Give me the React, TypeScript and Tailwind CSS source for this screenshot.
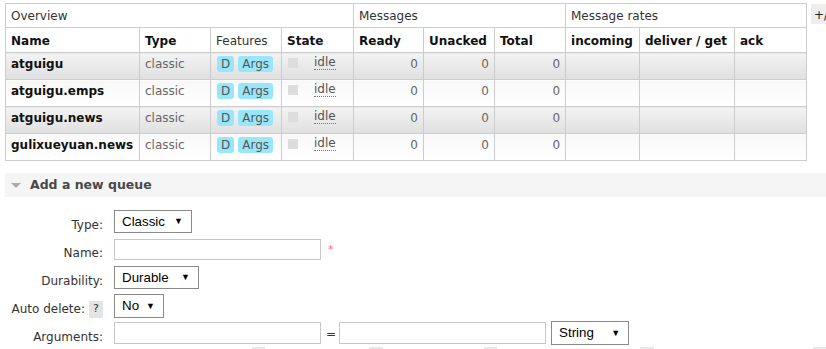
import React from "react";

const rows = ["atguigu", "atguigu.emps", "atguigu.news", "gulixueyuan.news"];

function Select({ label, w }: { label: string; w: string }) {
  return (
    <div
      className={`${w} h-full border border-[#8a8a8a] bg-white flex items-center justify-between pl-[7px] pr-[8px] text-[13.33px] text-black`}
      style={{ fontFamily: '"Liberation Sans", Arial, sans-serif' }}
    >
      <span>{label}</span>
      <span className="text-[9px] leading-none">▼</span>
    </div>
  );
}

function Label({ children }: { children: React.ReactNode }) {
  return (
    <div className="w-[103px] shrink-0 flex items-center justify-end pt-[6px] text-[12px] text-[#333]">
      {children}
    </div>
  );
}

export default function App() {
  const cell = "border border-[#ccc] px-[5px] align-top";
  return (
    <div
      className="w-[826px] h-[349px] overflow-hidden bg-white text-[12px] text-[#333]"
      style={{ fontFamily: '"DejaVu Sans", Verdana, sans-serif' }}
    >
      <div className="flex items-start pt-[3px] pl-[5px]">
        <table className="w-[801px] table-fixed border-collapse shrink-0">
          <colgroup>
            <col className="w-[134px]" />
            <col className="w-[71px]" />
            <col className="w-[71px]" />
            <col className="w-[72px]" />
            <col className="w-[70px]" />
            <col className="w-[71px]" />
            <col className="w-[71px]" />
            <col className="w-[74px]" />
            <col className="w-[95px]" />
            <col className="w-[72px]" />
          </colgroup>
          <thead>
            <tr className="h-[24px]">
              <th colSpan={4} className={`${cell} text-left font-normal align-middle pt-[3px] pb-0`}>Overview</th>
              <th colSpan={3} className={`${cell} text-left font-normal align-middle pt-[3px] pb-0`}>Messages</th>
              <th colSpan={3} className={`${cell} text-left font-normal align-middle pt-[3px] pb-0`}>Message rates</th>
            </tr>
            <tr className="h-[25px] text-[#111]">
              {["Name", "Type", "Features", "State", "Ready", "Unacked", "Total", "incoming", "deliver / get", "ack"].map(
                (h) => (
                  <th
                    key={h}
                    className={`${cell} text-left align-middle pt-[4px] pb-0 whitespace-nowrap ${h === "Features" ? "font-normal text-[#333]" : "font-bold"}`}
                  >
                    {h}
                  </th>
                )
              )}
            </tr>
          </thead>
          <tbody>
            {rows.map((name, i) => {
              const bg =
                i % 2 === 0
                  ? "bg-gradient-to-b from-[#f3f3f3] to-[#e0e0e0]"
                  : "bg-gradient-to-b from-[#f8f8f8] to-[#ffffff]";
              const c = `${cell} ${bg} h-[27px] pt-[2px] pb-0`;
              return (
                <tr key={name}>
                  <td className={`${c} font-bold text-[#111] whitespace-nowrap`}>{name}</td>
                  <td className={`${c} text-[#666]`}>classic</td>
                  <td className={c}>
                    <div className="flex gap-[4px] pt-[1px] pl-[1px]">
                      <span className="h-[16px] px-[4px] rounded-[3px] bg-[#99e6fa] text-[#555] leading-[16px]">D</span>
                      <span className="h-[16px] px-[4px] rounded-[3px] bg-[#99e6fa] text-[#555] leading-[16px]">Args</span>
                    </div>
                  </td>
                  <td className={c}>
                    <div className="flex items-start pl-[1px]">
                      <span className="mt-[3px] w-[10px] h-[10px] bg-[#ddd]" />
                      <span className="ml-[16px] text-[#555] border-b border-dotted border-[#777] leading-[14px]">idle</span>
                    </div>
                  </td>
                  <td className={`${c} text-right text-[#666]`}>0</td>
                  <td className={`${c} text-right text-[#666]`}>0</td>
                  <td className={`${c} text-right text-[#666]`}>0</td>
                  <td className={c}></td>
                  <td className={c}></td>
                  <td className={c}></td>
                </tr>
              );
            })}
          </tbody>
        </table>
        <div className="ml-[4px] mt-[1px] h-[20px] w-[30px] shrink-0 bg-[#eee] pl-[3px] pt-[2px] text-[12px] text-[#222] whitespace-nowrap">
          +/-
        </div>
      </div>

      <div className="mt-[12px] ml-[5px] h-[24px] bg-[#f5f5f5] flex items-center">
        <span className="ml-[6px] w-0 h-0 border-l-[5px] border-r-[5px] border-t-[5px] border-l-transparent border-r-transparent border-t-[#aaa]" />
        <span className="ml-[9px] font-bold text-[12.5px] text-[#484848]">Add a new queue</span>
      </div>

      <div className="flex flex-col">
        <div className="flex h-[23px] mt-[13px]">
          <Label>Type:</Label>
          <div className="ml-[11px] h-full">
            <Select label="Classic" w="w-[78px]" />
          </div>
        </div>
        <div className="flex h-[21px] mt-[6px]">
          <Label>Name:</Label>
          <div className="ml-[11px] w-[207px] h-full border border-[#c8c8c8] bg-white" />
          <span className="ml-[7px] mt-[3px] text-[11px] text-[#f07080]">*</span>
        </div>
        <div className="flex h-[23px] mt-[6px]">
          <Label>Durability:</Label>
          <div className="ml-[11px] h-full">
            <Select label="Durable" w="w-[85px]" />
          </div>
        </div>
        <div className="flex h-[24px] mt-[5px]">
          <div className="w-[103px] shrink-0 flex items-center justify-end pt-[6px] text-[12px] text-[#333]">
            <span>Auto delete:</span>
            <span className="ml-[4px] w-[14px] h-[17px] bg-[#e4e4e4] flex items-center justify-center text-[11px] text-[#333]">?</span>
          </div>
          <div className="ml-[11px] h-full">
            <Select label="No" w="w-[50px]" />
          </div>
        </div>
        <div className="flex h-[22px] mt-[4px] items-start">
          <Label>Arguments:</Label>
          <div className="ml-[11px] w-[207px] h-[22px] border border-[#c8c8c8] bg-white" />
          <span className="ml-[5px] mt-[3px] text-[12px] text-[#333]">=</span>
          <div className="ml-[3px] w-[207px] h-[22px] border border-[#c8c8c8] bg-white" />
          <div className="ml-[5px] h-[24px] -mt-[1px]">
            <Select label="String" w="w-[78px]" />
          </div>
        </div>
        <div className="flex mt-[3px] h-[10px]">
          <span className="ml-[252px] w-[14px] h-[10px] bg-[#e8e8e8]" />
          <span className="ml-[104px] w-[14px] h-[10px] bg-[#e8e8e8]" />
          <span className="ml-[101px] w-[14px] h-[10px] bg-[#e8e8e8]" />
          <span className="ml-[143px] w-[14px] h-[10px] bg-[#e8e8e8]" />
          <span className="ml-[159px] w-[14px] h-[10px] bg-[#e8e8e8]" />
        </div>
      </div>
    </div>
  );
}
